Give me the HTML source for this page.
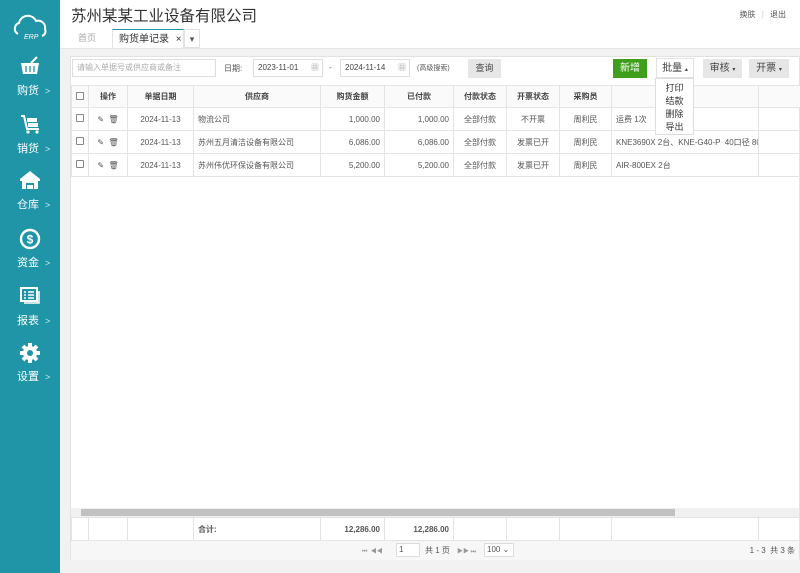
<!DOCTYPE html>
<html><head><meta charset="utf-8"><style>
*{margin:0;padding:0;box-sizing:border-box}
body{width:800px;height:573px;overflow:hidden;background:#f2f2f2;font-family:"Liberation Sans","Noto Sans CJK SC",sans-serif;position:relative;font-size:9px;color:#555}
.side{position:absolute;left:0;top:0;width:60px;height:573px;background:#1f95a7}
.nav{position:absolute;left:0;width:60px;text-align:center;color:#fff;font-size:11px}
.nav .lbl{position:absolute;left:17px;top:26px;white-space:nowrap}
.nav .lbl b{font-weight:normal;font-size:9px;margin-left:6px;opacity:.8}
.hdr{position:absolute;left:60px;top:0;width:740px;height:48px;background:#fff}
.title{position:absolute;left:11px;top:4px;font-size:15.5px;color:#333;white-space:nowrap}
.tabs{position:absolute;left:12px;top:29px;height:19px}
.tab{position:absolute;top:0;height:19px;line-height:19px;font-size:9px;white-space:nowrap}
.tr{position:absolute;right:14px;top:9px;font-size:8px;color:#555}
.panel{position:absolute;left:70px;top:56px;width:730px;height:504px;background:#fff;border:1px solid #e2e2e2}
.inp{position:absolute;height:18px;border:1px solid #ddd;background:#fff;font-size:8px;line-height:16px;padding-left:4px;color:#444;white-space:nowrap}
.btn{position:absolute;height:19px;line-height:19px;text-align:center;font-size:9px;background:#e6e6e6;color:#444}
table{border-collapse:collapse;position:absolute;left:0;top:28px;table-layout:fixed}
td,th{border:1px solid #e4e4e4;height:23px;font-size:8px;white-space:nowrap;overflow:hidden}
th{font-weight:bold;color:#444;height:22px;background:#fafafa}
.cb{display:inline-block;width:8px;height:8px;border:1px solid #888;border-radius:1px}
.c{text-align:center}.r{text-align:right;padding-right:4px}.l{padding-left:4px}
</style></head><body>
<div class="side">
 <div class="nav" style="top:12px"><svg width="40" height="30" viewBox="0 0 40 30"><path d="M8 22a6 6 0 0 1 1-11a9 9 0 0 1 17-2a7 7 0 0 1 9 8a5 5 0 0 1-3 7" fill="none" stroke="#fff" stroke-width="2"/><text x="14" y="27" font-size="7" fill="#fff" font-style="italic" font-family="Liberation Sans">ERP</text></svg></div>
 <div class="nav" style="top:56px"><svg width="22" height="20" viewBox="0 0 22 20"><path d="M2 7h18l-2 11H4z" fill="#fff"/><path d="M12 7l6-6" stroke="#fff" stroke-width="2"/><path d="M7 10v6M11 10v6M15 10v6" stroke="#1f95a7" stroke-width="1.3"/></svg><div class="lbl">购货<b>&gt;</b></div></div>
 <div class="nav" style="top:114px"><svg width="22" height="20" viewBox="0 0 22 20"><path d="M2 2h3l3 13h12" fill="none" stroke="#fff" stroke-width="2"/><rect x="8" y="4" width="10" height="4" fill="#fff"/><rect x="9" y="9" width="10" height="4" fill="#fff"/><circle cx="9" cy="18" r="1.6" fill="#fff"/><circle cx="18" cy="18" r="1.6" fill="#fff"/></svg><div class="lbl">销货<b>&gt;</b></div></div>
 <div class="nav" style="top:170px"><svg width="22" height="20" viewBox="0 0 22 20"><path d="M1 9L11 1l10 8v2H1z" fill="#fff"/><rect x="3" y="11" width="16" height="8" fill="#fff"/><rect x="7" y="13" width="8" height="6" fill="#1f95a7"/><rect x="8" y="15" width="6" height="4" fill="#fff"/></svg><div class="lbl">仓库<b>&gt;</b></div></div>
 <div class="nav" style="top:228px"><svg width="22" height="22" viewBox="0 0 22 22"><circle cx="11" cy="11" r="9" fill="none" stroke="#fff" stroke-width="2.4"/><text x="11" y="15.5" text-anchor="middle" font-size="12" font-weight="bold" fill="#fff" font-family="Liberation Sans">$</text></svg><div class="lbl">资金<b>&gt;</b></div></div>
 <div class="nav" style="top:286px"><svg width="22" height="20" viewBox="0 0 22 20"><rect x="2" y="2" width="16" height="13" fill="none" stroke="#fff" stroke-width="2"/><path d="M5 6h2M9 6h6M5 9h2M9 9h6M5 12h2M9 12h6" stroke="#fff" stroke-width="1.5"/><path d="M20 5v12H5" fill="none" stroke="#fff" stroke-width="1.5"/></svg><div class="lbl">报表<b>&gt;</b></div></div>
 <div class="nav" style="top:342px"><svg width="22" height="22" viewBox="0 0 22 22"><circle cx="11" cy="11" r="7" fill="#fff"/><path d="M11 1v20M1 11h20M4 4l14 14M18 4L4 18" stroke="#fff" stroke-width="4"/><circle cx="11" cy="11" r="3" fill="#1f95a7"/></svg><div class="lbl">设置<b>&gt;</b></div></div>
</div>
<div class="hdr">
 <div class="title">苏州某某工业设备有限公司</div>
 <div class="tr">换肤 <span style="color:#ccc;margin:0 4px">|</span> 退出</div>
 <div class="tabs">
  <div class="tab" style="left:6px;color:#aaa">首页</div>
  <div class="tab" style="left:40px;width:72px;border-top:1px solid #1f95a7;border-left:1px solid #e2e2e2;border-right:1px solid #e2e2e2;background:#fff;padding-left:6px;color:#333;font-size:10px">购货单记录 <span style="margin-left:4px">×</span></div>
  <div class="tab" style="left:112px;width:16px;border:1px solid #e2e2e2;text-align:center">▾</div>
 </div>
</div>
<div style="position:absolute;left:60px;top:48px;width:740px;height:1px;background:#e6e6e6"></div>
<div class="panel">
 <div class="inp" style="left:1px;top:2px;width:144px;color:#aaa">请输入单据号或供应商或备注</div>
 <div style="position:absolute;left:153px;top:6px;font-size:8px">日期:</div>
 <div class="inp" style="left:182px;top:2px;width:70px">2023-11-01 <span style="float:right;margin-right:3px;color:#999">▦</span></div>
 <div style="position:absolute;left:258px;top:6px;font-size:8px">-</div>
 <div class="inp" style="left:269px;top:2px;width:70px">2024-11-14 <span style="float:right;margin-right:3px;color:#999">▦</span></div>
 <div style="position:absolute;left:346px;top:6px;font-size:7px">(高级搜索)</div>
 <div class="btn" style="left:397px;top:2px;width:33px">查询</div>
 <div class="btn" style="left:542px;top:2px;width:34px;background:#3f9e1c;color:#fff;font-size:10px">新增</div>
 <div class="btn" style="left:585px;top:1px;width:38px;background:#fff;border:1px solid #e2e2e2;height:20px;font-size:10px">批量 <span style="font-size:6px">▴</span></div>
 <div class="btn" style="left:632px;top:2px;width:39px;font-size:10px">审核 <span style="font-size:6px">▾</span></div>
 <div class="btn" style="left:678px;top:2px;width:40px;font-size:10px">开票 <span style="font-size:6px">▾</span></div>
 <table style="width:730px">
  <colgroup><col style="width:17px"><col style="width:39px"><col style="width:66px"><col style="width:127px"><col style="width:64px"><col style="width:69px"><col style="width:53px"><col style="width:53px"><col style="width:52px"><col style="width:147px"><col style="width:43px"></colgroup>
  <tr><th><span class="cb"></span></th><th>操作</th><th>单据日期</th><th>供应商</th><th>购货金额</th><th>已付款</th><th>付款状态</th><th>开票状态</th><th>采购员</th><th></th><th></th></tr>
  <tr><td class="c"><span class="cb"></span></td><td class="c">✎ &nbsp;🗑</td><td class="c">2024-11-13</td><td class="l">物流公司</td><td class="r">1,000.00</td><td class="r">1,000.00</td><td class="c">全部付款</td><td class="c">不开票</td><td class="c">周利民</td><td class="l">运费 1次</td><td></td></tr>
  <tr><td class="c"><span class="cb"></span></td><td class="c">✎ &nbsp;🗑</td><td class="c">2024-11-13</td><td class="l">苏州五月清洁设备有限公司</td><td class="r">6,086.00</td><td class="r">6,086.00</td><td class="c">全部付款</td><td class="c">发票已开</td><td class="c">周利民</td><td class="l">KNE3690X 2台、KNE-G40-P &nbsp;40口径 80...</td><td></td></tr>
  <tr><td class="c"><span class="cb"></span></td><td class="c">✎ &nbsp;🗑</td><td class="c">2024-11-13</td><td class="l">苏州伟优环保设备有限公司</td><td class="r">5,200.00</td><td class="r">5,200.00</td><td class="c">全部付款</td><td class="c">发票已开</td><td class="c">周利民</td><td class="l">AIR-800EX 2台</td><td></td></tr>
 </table>
 <div style="position:absolute;left:584px;top:21px;width:39px;height:57px;background:#fff;border:1px solid #ddd;font-size:9px;line-height:13px;text-align:center;padding-top:3px;color:#333">打印<br>结款<br>删除<br>导出</div>
 <div style="position:absolute;left:0;top:451px;width:728px;height:9px;background:#f0f0f0"><div style="position:absolute;left:10px;top:1px;width:594px;height:7px;background:#c1c1c1"></div></div>
 <table style="width:730px;top:460px">
  <colgroup><col style="width:17px"><col style="width:39px"><col style="width:66px"><col style="width:127px"><col style="width:64px"><col style="width:69px"><col style="width:53px"><col style="width:53px"><col style="width:52px"><col style="width:147px"><col style="width:43px"></colgroup>
  <tr><td></td><td></td><td></td><td class="l" style="font-weight:bold">合计:</td><td class="r" style="font-weight:bold">12,286.00</td><td class="r" style="font-weight:bold">12,286.00</td><td></td><td></td><td></td><td></td><td></td></tr>
 </table>
 <div style="position:absolute;left:0;top:483px;width:728px;height:20px;background:#f7f7f7;border-top:1px solid #e4e4e4;font-size:8px">
  <span style="position:absolute;left:291px;top:5px;color:#999;font-size:6px">⏮ &nbsp;◀◀</span>
  <span style="position:absolute;left:325px;top:2px;width:24px;height:14px;border:1px solid #ddd;background:#fff;padding-left:2px;line-height:12px">1</span>
  <span style="position:absolute;left:354px;top:4px">共 1 页</span>
  <span style="position:absolute;left:386px;top:5px;color:#999;font-size:6px">▶▶ ⏭</span>
  <span style="position:absolute;left:413px;top:2px;width:30px;height:14px;border:1px solid #ddd;background:#fff;padding-left:2px;line-height:12px">100 ⌄</span>
  <span style="position:absolute;right:4px;top:4px">1 - 3 &nbsp;共 3 条</span>
 </div>
</div>
</body></html>
